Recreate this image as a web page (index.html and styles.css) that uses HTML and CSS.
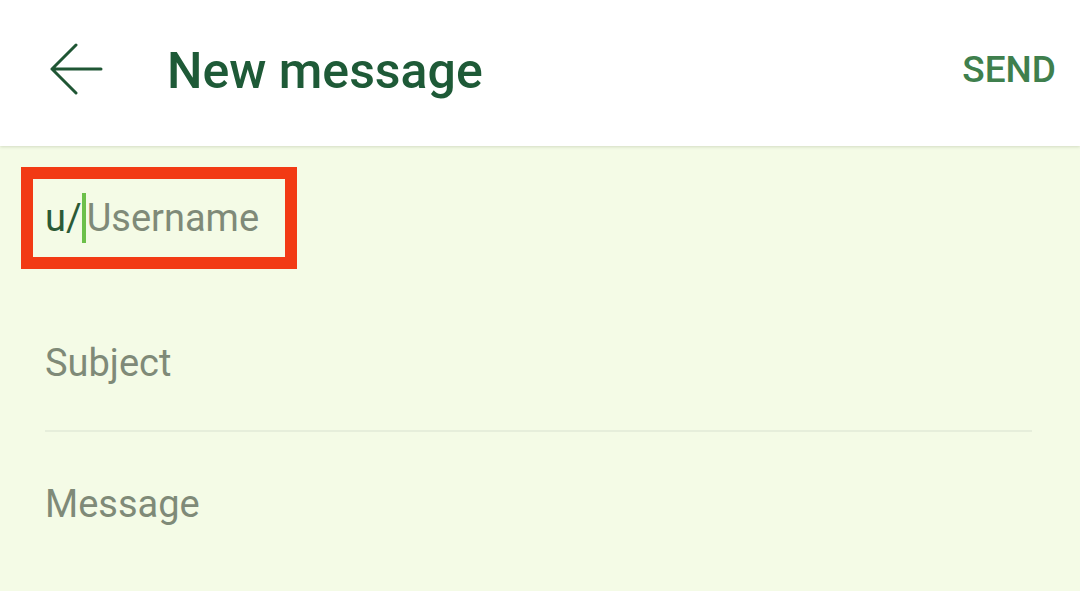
FILE: index.html
```html
<!DOCTYPE html>
<html lang="en">
<head>
  <meta charset="UTF-8">
  <title>New message</title>
  <link rel="stylesheet" href="styles.css">
</head>
<body>
  <div class="header">
    <a class="back-btn" href="#">
      <svg width="54" height="52" viewBox="0 0 54 52">
        <path d="M52 26 H3 M27 2 L3 26 L27 50" fill="none" stroke="#1f5634" stroke-width="3" stroke-linecap="round" stroke-linejoin="round"/>
      </svg>
    </a>
    <h1 class="title">New message</h1>
    <button class="send-btn">SEND</button>
  </div>

  <div class="compose">
    <div class="to-box">
      <span class="prefix">u/</span><span class="cursor"></span><span class="placeholder">Username</span>
    </div>

    <div class="field subject">
      <span class="placeholder">Subject</span>
    </div>

    <div class="field message">
      <span class="placeholder">Message</span>
    </div>
  </div>
</body>
</html>
```

FILE: styles.css
```css
body {
  font-family: Roboto, "Noto Sans", sans-serif;
  margin: 0;
  background-color: #f4fbe6;
  height: 591px;
  overflow: hidden;
}

.header {
  display: flex;
  align-items: center;
  height: 138px;
  padding: 0 24px 8px 49px;
  background-color: #fff;
  box-shadow: 0 1px 3px rgba(60, 80, 40, 0.18);
  position: relative;
}

.back-btn {
  display: flex;
  width: 54px;
  height: 52px;
}

.title {
  margin: 4px 0 0 64px;
  font-size: 50px;
  font-weight: 500;
  color: #1e5a37;
  flex: 1;
}

.send-btn {
  background: none;
  border: none;
  padding: 0;
  font-family: inherit;
  font-size: 37px;
  font-weight: 500;
  color: #3f7f4d;
  cursor: pointer;
}

.compose {
  padding: 21px 48px 0 21px;
}

.to-box {
  display: flex;
  align-items: center;
  width: fit-content;
  border: 12px solid #f23a14;
  padding: 14px 26px 14px 12px;
  font-size: 38px;
  line-height: 44px;
}

.prefix {
  color: #2b5a36;
}

.cursor {
  display: inline-block;
  width: 4px;
  height: 50px;
  margin: 0 1px 0 0;
  background-color: #6cc04a;
}

.placeholder {
  color: #7f8a78;
}

.field {
  margin-left: 24px;
  font-size: 38px;
  line-height: 44px;
}

.subject {
  padding: 72px 0 45px;
  border-bottom: 2px solid #e6eedb;
}

.message {
  padding-top: 50px;
}
```
